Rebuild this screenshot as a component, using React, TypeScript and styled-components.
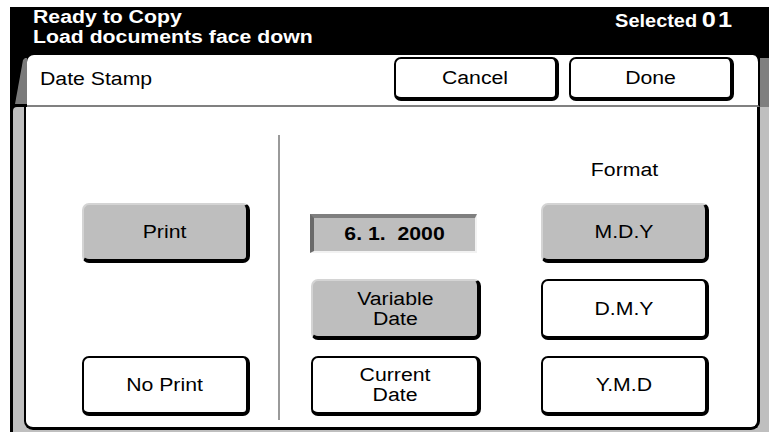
import React from 'react';
import styled, { createGlobalStyle } from 'styled-components';

const Global = createGlobalStyle`
  html, body { margin: 0; padding: 0; background: #fff; }
  body { font-family: "Liberation Sans", Arial, sans-serif; }
  * { box-sizing: border-box; }
`;

const Page = styled.div`
  width: 769px;
  height: 432px;
  background: #fff;
  padding: 7px 0 0 10px;
  overflow: hidden;
`;

const Screen = styled.div`
  background: #000;
  height: 425px;
  display: flex;
  flex-direction: column;
`;

const Stretch = styled.span<{ $origin?: string; $scale?: number }>`
  display: inline-block;
  transform: scaleX(${(p) => p.$scale ?? 1.18});
  transform-origin: ${(p) => p.$origin ?? 'center'};
  white-space: pre;
`;

const StatusBar = styled.header`
  height: 48px;
  flex: none;
  display: flex;
  justify-content: space-between;
  align-items: flex-start;
  padding: 0 35px 0 23px;
  color: #fff;
`;

const StatusMessage = styled.div`
  font-weight: bold;
  font-size: 18px;
  line-height: 20px;
  display: flex;
  flex-direction: column;
  align-items: flex-start;
`;

const Selected = styled.div`
  margin-top: 1px;
  font-weight: bold;
  line-height: 24px;
  display: flex;
  align-items: baseline;
  gap: 8px;
`;

const SelectedWord = styled.span`
  font-size: 19px;
`;

const SelectedCount = styled.span`
  font-size: 22px;
  letter-spacing: 2px;
`;

const TabRow = styled.div`
  height: 52px;
  flex: none;
  display: flex;
`;

const LeftBevel = styled.div`
  width: 17px;
  flex: none;
  background: #000;
`;

const BevelShape = styled.div`
  width: 100%;
  height: 100%;
  background: #7a7a7a;
  clip-path: polygon(13px 5px, 15px 3px, 17px 3px, 17px 49px, 5px 49px);
`;

const RightBevel = styled.div`
  width: 9px;
  flex: none;
  margin-top: 3px;
  background: #7f7f7f;
`;

const Tab = styled.div`
  flex: 1;
  background: #fff;
  border-right: 2px solid #000;
  border-bottom: 2px solid #808080;
  border-radius: 7px 7px 0 0;
  display: flex;
  align-items: center;
  gap: 10px;
  padding: 0 24px 2px 13px;
`;

const Title = styled.div`
  flex: 1;
  font-size: 18px;
  color: #000;
`;

const Key = styled.button<{ $on?: boolean }>`
  width: 100%;
  height: 100%;
  margin: 0;
  padding: 0;
  font-family: "Liberation Sans", Arial, sans-serif;
  font-size: 18px;
  line-height: 20px;
  color: #000;
  background: ${(p) => (p.$on ? '#bebebe' : '#fff')};
  border-style: solid;
  border-width: 2px 4px 4px 2px;
  border-color: ${(p) => (p.$on ? '#d4d4d4 #000 #000 #d4d4d4' : '#000')};
  border-radius: 7px;
  display: flex;
  align-items: center;
  justify-content: center;
  text-align: center;
`;

const HeaderKey = styled(Key)`
  width: 165px;
  height: 44px;
  flex: none;
`;

const BodyFrame = styled.div`
  flex: 1;
  margin-left: 3px;
  background: #bfbfbf;
  border-top-left-radius: 4px;
  padding: 0 9px 2px 11px;
  display: flex;
`;

const Panel = styled.div`
  flex: 1;
  background: #fff;
  border-style: solid;
  border-color: #000;
  border-width: 0 3px 3px 2px;
  border-radius: 0 0 9px 9px;
  padding: 28px 0 0 56px;
  display: grid;
  grid-template-columns: 168px 28px 2px 31px 170px 60px 168px;
  grid-template-rows: 52px 60px 61px 60px;
  row-gap: 16px;
  align-content: start;
`;

const Cell = styled.div<{ $col: number; $row: number }>`
  grid-column: ${(p) => p.$col};
  grid-row: ${(p) => p.$row};
  display: flex;
`;

const Divider = styled.div`
  grid-column: 3;
  grid-row: 1 / span 4;
  margin-bottom: -4px;
  background: #9a9a9a;
  width: 2px;
`;

const FormatLabel = styled.div`
  grid-column: 7;
  grid-row: 1;
  align-self: end;
  margin-bottom: 7px;
  text-align: center;
  font-size: 18px;
  line-height: 20px;
  color: #000;
`;

const DateField = styled.div`
  align-self: center;
  height: 39px;
  width: 167px;
  margin-left: -1px;
  background: #bebebe;
  border-style: solid;
  border-width: 4px 2px 2px 4px;
  border-color: #7f7f7f #f2f2f2 #f2f2f2 #6a6a6a;
  display: flex;
  align-items: center;
  justify-content: center;
  font-weight: bold;
  font-size: 18px;
  color: #000;
`;

export default function App() {
  return (
    <>
      <Global />
      <Page>
        <Screen>
          <StatusBar>
            <StatusMessage>
              <Stretch $origin="left">Ready to Copy</Stretch>
              <Stretch $origin="left">Load documents face down</Stretch>
            </StatusMessage>
            <Selected>
              <SelectedWord>
                <Stretch $origin="right" $scale={1.05}>Selected</Stretch>
              </SelectedWord>
              <SelectedCount>
                <Stretch $origin="right" $scale={1.15}>01</Stretch>
              </SelectedCount>
            </Selected>
          </StatusBar>
          <TabRow>
            <LeftBevel>
              <BevelShape />
            </LeftBevel>
            <Tab>
              <Title>
                <Stretch $origin="left">Date Stamp</Stretch>
              </Title>
              <HeaderKey>
                <Stretch>Cancel</Stretch>
              </HeaderKey>
              <HeaderKey>
                <Stretch>Done</Stretch>
              </HeaderKey>
            </Tab>
            <RightBevel />
          </TabRow>
          <BodyFrame>
            <Panel>
              <Divider />
              <FormatLabel>
                <Stretch>Format</Stretch>
              </FormatLabel>
              <Cell $col={1} $row={2}>
                <Key $on>
                  <Stretch>Print</Stretch>
                </Key>
              </Cell>
              <Cell $col={1} $row={4}>
                <Key>
                  <Stretch>No Print</Stretch>
                </Key>
              </Cell>
              <Cell $col={5} $row={2}>
                <DateField>
                  <Stretch>{'6. 1.  2000'}</Stretch>
                </DateField>
              </Cell>
              <Cell $col={5} $row={3}>
                <Key $on>
                  <Stretch>{'Variable\nDate'}</Stretch>
                </Key>
              </Cell>
              <Cell $col={5} $row={4}>
                <Key>
                  <Stretch>{'Current\nDate'}</Stretch>
                </Key>
              </Cell>
              <Cell $col={7} $row={2}>
                <Key $on>
                  <Stretch>M.D.Y</Stretch>
                </Key>
              </Cell>
              <Cell $col={7} $row={3}>
                <Key>
                  <Stretch>D.M.Y</Stretch>
                </Key>
              </Cell>
              <Cell $col={7} $row={4}>
                <Key>
                  <Stretch>Y.M.D</Stretch>
                </Key>
              </Cell>
            </Panel>
          </BodyFrame>
        </Screen>
      </Page>
    </>
  );
}
